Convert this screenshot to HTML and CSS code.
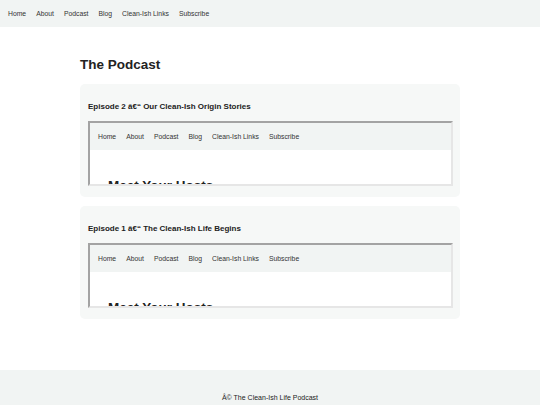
FILE: index.html
```html
<!DOCTYPE html>
<html>
<head>
<meta charset="utf-8">
<link rel="stylesheet" href="styles.css">
</head>
<body>
<nav class="nav">
  <a>Home</a><a>About</a><a>Podcast</a><a>Blog</a><a>Clean-Ish Links</a><a>Subscribe</a>
</nav>
<main class="main">
  <h1 class="title">The Podcast</h1>
  <section class="card">
    <h2 class="ep">Episode 2 â€“ Our Clean-Ish Origin Stories</h2>
    <div class="frame">
      <nav class="nav inner-nav">
        <a>Home</a><a>About</a><a>Podcast</a><a>Blog</a><a>Clean-Ish Links</a><a>Subscribe</a>
      </nav>
      <div class="inner-body"><h3 class="hosts">Meet Your Hosts</h3></div>
    </div>
  </section>
  <section class="card">
    <h2 class="ep">Episode 1 â€“ The Clean-Ish Life Begins</h2>
    <div class="frame">
      <nav class="nav inner-nav">
        <a>Home</a><a>About</a><a>Podcast</a><a>Blog</a><a>Clean-Ish Links</a><a>Subscribe</a>
      </nav>
      <div class="inner-body"><h3 class="hosts">Meet Your Hosts</h3></div>
    </div>
  </section>
</main>
<footer class="footer">Â© The Clean-Ish Life Podcast</footer>
</body>
</html>
```
FILE: styles.css
```css
html, body {
  margin: 0;
  padding: 0;
  background: #fff;
  font-family: "Liberation Sans", Arial, sans-serif;
  color: #222;
}
.nav {
  display: flex;
  align-items: center;
  gap: 10px;
  height: 27px;
  padding-left: 8px;
  background: #f1f4f3;
  font-size: 6.8px;
}
.nav a {
  color: #333;
}
.main {
  width: 380px;
  margin: 0 auto;
  padding-top: 30px;
  padding-bottom: 42px;
}
.title {
  margin: 0 0 11px;
  font-size: 13.5px;
  line-height: 16px;
  font-weight: bold;
  color: #222;
}
.card {
  background: #f6f8f7;
  border-radius: 5px;
  padding: 18px 7px 11px 8px;
  margin-bottom: 9px;
}
.ep {
  margin: 0 0 9px;
  font-size: 8px;
  line-height: 10px;
  font-weight: bold;
  color: #222;
}
.frame {
  height: 61px;
  overflow: hidden;
  border: 2px solid;
  border-color: #a3a3a3 #e6e6e6 #e6e6e6 #a3a3a3;
  background: #fff;
}
.inner-nav {
  padding-left: 8px;
}
.inner-body {
  padding: 28px 18px 0;
}
.hosts {
  margin: 0;
  font-size: 13.5px;
  line-height: 16px;
  font-weight: bold;
  color: #222;
}
.footer {
  background: #f1f4f3;
  height: 35px;
  box-sizing: border-box;
  padding-top: 24px;
  text-align: center;
  font-size: 7px;
  line-height: 8px;
  color: #222;
}
```
